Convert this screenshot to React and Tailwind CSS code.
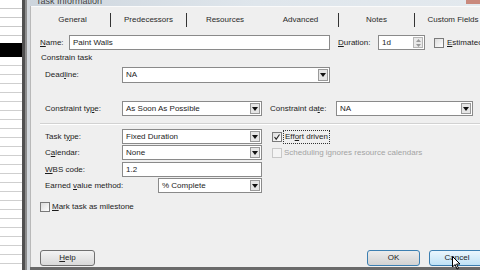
import React from "react";

const font = { fontFamily: '"Liberation Sans", Arial, sans-serif' };

function Arrow() {
    return (
        <div className="w-[10px] h-full border border-[#9a9a9a] bg-[#e6e6e6] flex items-center justify-center shrink-0">
            <svg width="6" height="4" viewBox="0 0 6 4">
                <path d="M0 0 L6 0 L3 4 Z" fill="#111" />
            </svg>
        </div>
    );
}

function Dropdown({ value, width }) {
    return (
        <div className={`${width} h-full bg-white border border-[#8a8a8a] flex items-center p-[1px]`}>
            <div className="flex-1 pl-[2px] truncate">{value}</div>
            <Arrow />
        </div>
    );
}

function Check({ checked, disabled }) {
    return (
        <div className={`w-[10px] h-[10px] border ${disabled ? "border-[#c8c8c8] bg-[#f4f4f4]" : "border-[#7a7a7a] bg-gradient-to-br from-[#dcdcdc] to-white"} flex items-center justify-center shrink-0`}>
            {checked && (
                <svg width="8" height="8" viewBox="0 0 8 8">
                    <path d="M1.5 4 L3.2 6.2 L6.5 1.5" stroke="#222" strokeWidth="1.1" fill="none" />
                </svg>
            )}
        </div>
    );
}

function Button({ children, width, variant }) {
    const look = {
        plain: "border-[#707070] from-[#f3f3f3] to-[#d9d9d9]",
        ok: "border-[#3c7fb1] from-[#ececec] to-[#d2d2d2]",
        hover: "border-[#3c7fb1] from-[#eaf6fd] to-[#bfe2f6]",
    }[variant];
    return (
        <div className={`${width} h-[16px] border rounded-[3px] bg-gradient-to-b ${look} flex items-center justify-center text-[#222]`}>
            {children}
        </div>
    );
}

function Sheet() {
    const top = [0, 1, 2, 3];
    const bottom = Array.from({ length: 24 }, (_, i) => i);
    return (
        <div className="w-[22px] h-full bg-white flex flex-col">
            {top.map((i) => (
                <div key={i} className="h-[9px] border-b border-[#c9c9c9] shrink-0" />
            ))}
            <div className="h-[7px] shrink-0" />
            <div className="h-[14px] bg-black shrink-0" />
            {bottom.map((i) => (
                <div key={i} className="h-[9px] border-b border-[#cfcfcf] shrink-0" />
            ))}
        </div>
    );
}

function Tabs() {
    const tabs = [
        { name: "General", sep: true },
        { name: "Predecessors", sep: true },
        { name: "Resources", sep: false },
        { name: "Advanced", sep: true },
        { name: "Notes", sep: true },
        { name: "Custom Fields", sep: false },
    ];
    return (
        <div className="h-[26px] flex items-center pl-[4px] border-t border-[#fafafa] shrink-0">
            {tabs.map((t) => (
                <div key={t.name} className="w-[76px] shrink-0 h-[14px] flex items-center relative">
                    <div className="flex-1 text-center whitespace-nowrap text-[#2a2a2a]">{t.name}</div>
                    {t.sep && <div className="w-[1px] h-[14px] bg-[#333]" />}
                </div>
            ))}
        </div>
    );
}

export default function App() {
    return (
        <div style={font} className="w-[480px] h-[270px] overflow-hidden flex bg-white text-[8px] text-[#1c1c1c] relative">
            <Sheet />

            <div className="w-[8px] h-full flex shrink-0">
                <div className="w-[3px] h-full bg-[#505050]" />
                <div className="w-[2px] h-full bg-[#8d8d8d]" />
                <div className="w-[3px] h-full bg-[#d4d9de]" />
            </div>

            <div className="flex-1 h-full flex flex-col min-w-0">
                <div className="h-[6px] shrink-0 overflow-hidden bg-gradient-to-r from-[#cdd5dd] via-[#dfe6ec] to-[#e3e9ee] flex items-end pl-[6px] relative">
                    <div className="text-[9px] leading-[9px] text-[#444] whitespace-nowrap">Task Information</div>
                    <div className="absolute right-0 top-0 w-[14px] h-[4px] bg-[#c9897d]" />
                </div>

                <div className="flex-1 bg-[#efefef] border-l border-[#b9b9b9] flex flex-col w-[470px]">
                    <Tabs />

                    <div className="pl-[9px] flex flex-col">
                        <div className="mt-[3px] h-[15px] flex items-center">
                            <div className="w-[29px]"><span className="underline">N</span>ame:</div>
                            <div className="w-[261px] h-full bg-white border border-[#8a8a8a] flex items-center pl-[3px]">Paint Walls</div>
                            <div className="w-[40px] ml-[8px]"><span className="underline">D</span>uration:</div>
                            <div className="w-[47px] h-full bg-white border border-[#8a8a8a] flex items-center pl-[3px] p-[1px]">
                                <div className="flex-1">1d</div>
                                <div className="w-[10px] h-full border border-[#b5b5b5] bg-[#e9e9e9] flex flex-col items-center justify-center gap-[2px]">
                                    <svg width="5" height="3" viewBox="0 0 5 3"><path d="M0 3 L5 3 L2.5 0 Z" fill="#999" /></svg>
                                    <svg width="5" height="3" viewBox="0 0 5 3"><path d="M0 0 L5 0 L2.5 3 Z" fill="#999" /></svg>
                                </div>
                            </div>
                            <div className="ml-[9px]"><Check /></div>
                            <div className="ml-[3px] whitespace-nowrap"><span className="underline">E</span>stimated</div>
                        </div>

                        <div className="mt-[2px] h-[12px] flex items-center pl-[1px]">Constrain task</div>

                        <div className="mt-[3px] h-[16px] flex items-center pl-[5px]">
                            <div className="w-[77px]">Dead<span className="underline">l</span>ine:</div>
                            <Dropdown value="NA" width="w-[208px]" />
                        </div>

                        <div className="mt-[18px] h-[15px] flex items-center pl-[5px]">
                            <div className="w-[77px]">Constraint ty<span className="underline">p</span>e:</div>
                            <Dropdown value="As Soon As Possible" width="w-[140px]" />
                            <div className="w-[66px] ml-[8px] whitespace-nowrap">Constraint da<span className="underline">t</span>e:</div>
                            <Dropdown value="NA" width="w-[137px]" />
                        </div>

                        <div className="mt-[7px] h-[1px] bg-[#d2d2d2]" />
                        <div className="h-[1px] bg-white" />

                        <div className="mt-[4px] h-[15px] flex items-center pl-[5px]">
                            <div className="w-[77px]">Task t<span className="underline">y</span>pe:</div>
                            <Dropdown value="Fixed Duration" width="w-[140px]" />
                            <div className="ml-[10px]"><Check checked /></div>
                            <div className="ml-[1px] px-[1px] border border-dotted border-[#333]">Eff<span className="underline">o</span>rt driven</div>
                        </div>

                        <div className="mt-[1px] h-[15px] flex items-center pl-[5px]">
                            <div className="w-[77px]">C<span className="underline">a</span>lendar:</div>
                            <Dropdown value="None" width="w-[140px]" />
                            <div className="ml-[10px]"><Check disabled /></div>
                            <div className="ml-[2px] text-[#a3a3a3] whitespace-nowrap">Scheduling ignores resource calendars</div>
                        </div>

                        <div className="mt-[2px] h-[15px] flex items-center pl-[5px]">
                            <div className="w-[77px]"><span className="underline">W</span>BS code:</div>
                            <div className="w-[140px] h-full bg-white border border-[#8a8a8a] flex items-center pl-[3px]">1.2</div>
                        </div>

                        <div className="mt-[1px] h-[15px] flex items-center pl-[5px]">
                            <div className="w-[113px]">Earned <span className="underline">v</span>alue method:</div>
                            <Dropdown value="% Complete" width="w-[104px]" />
                        </div>

                        <div className="mt-[9px] h-[10px] flex items-center">
                            <Check />
                            <div className="ml-[2px]"><span className="underline">M</span>ark task as milestone</div>
                        </div>

                        <div className="mt-[38px] flex items-center">
                            <Button width="w-[55px]" variant="plain"><span className="underline">H</span>elp</Button>
                            <div className="ml-[272px]">
                                <Button width="w-[53px]" variant="ok">OK</Button>
                            </div>
                            <div className="ml-[9px]">
                                <Button width="w-[56px]" variant="hover">Cancel</Button>
                            </div>
                        </div>
                    </div>
                </div>
                <div className="h-[3px] shrink-0 bg-[#6a6a6a]" />
            </div>

            <svg className="absolute left-[452px] top-[256px]" width="10" height="15" viewBox="0 0 10 15">
                <path d="M0.5 0.5 L0.5 11 L3 8.5 L5 13 L6.5 12.3 L4.6 8 L8 8 Z" fill="#fff" stroke="#000" strokeWidth="1" />
            </svg>
        </div>
    );
}
